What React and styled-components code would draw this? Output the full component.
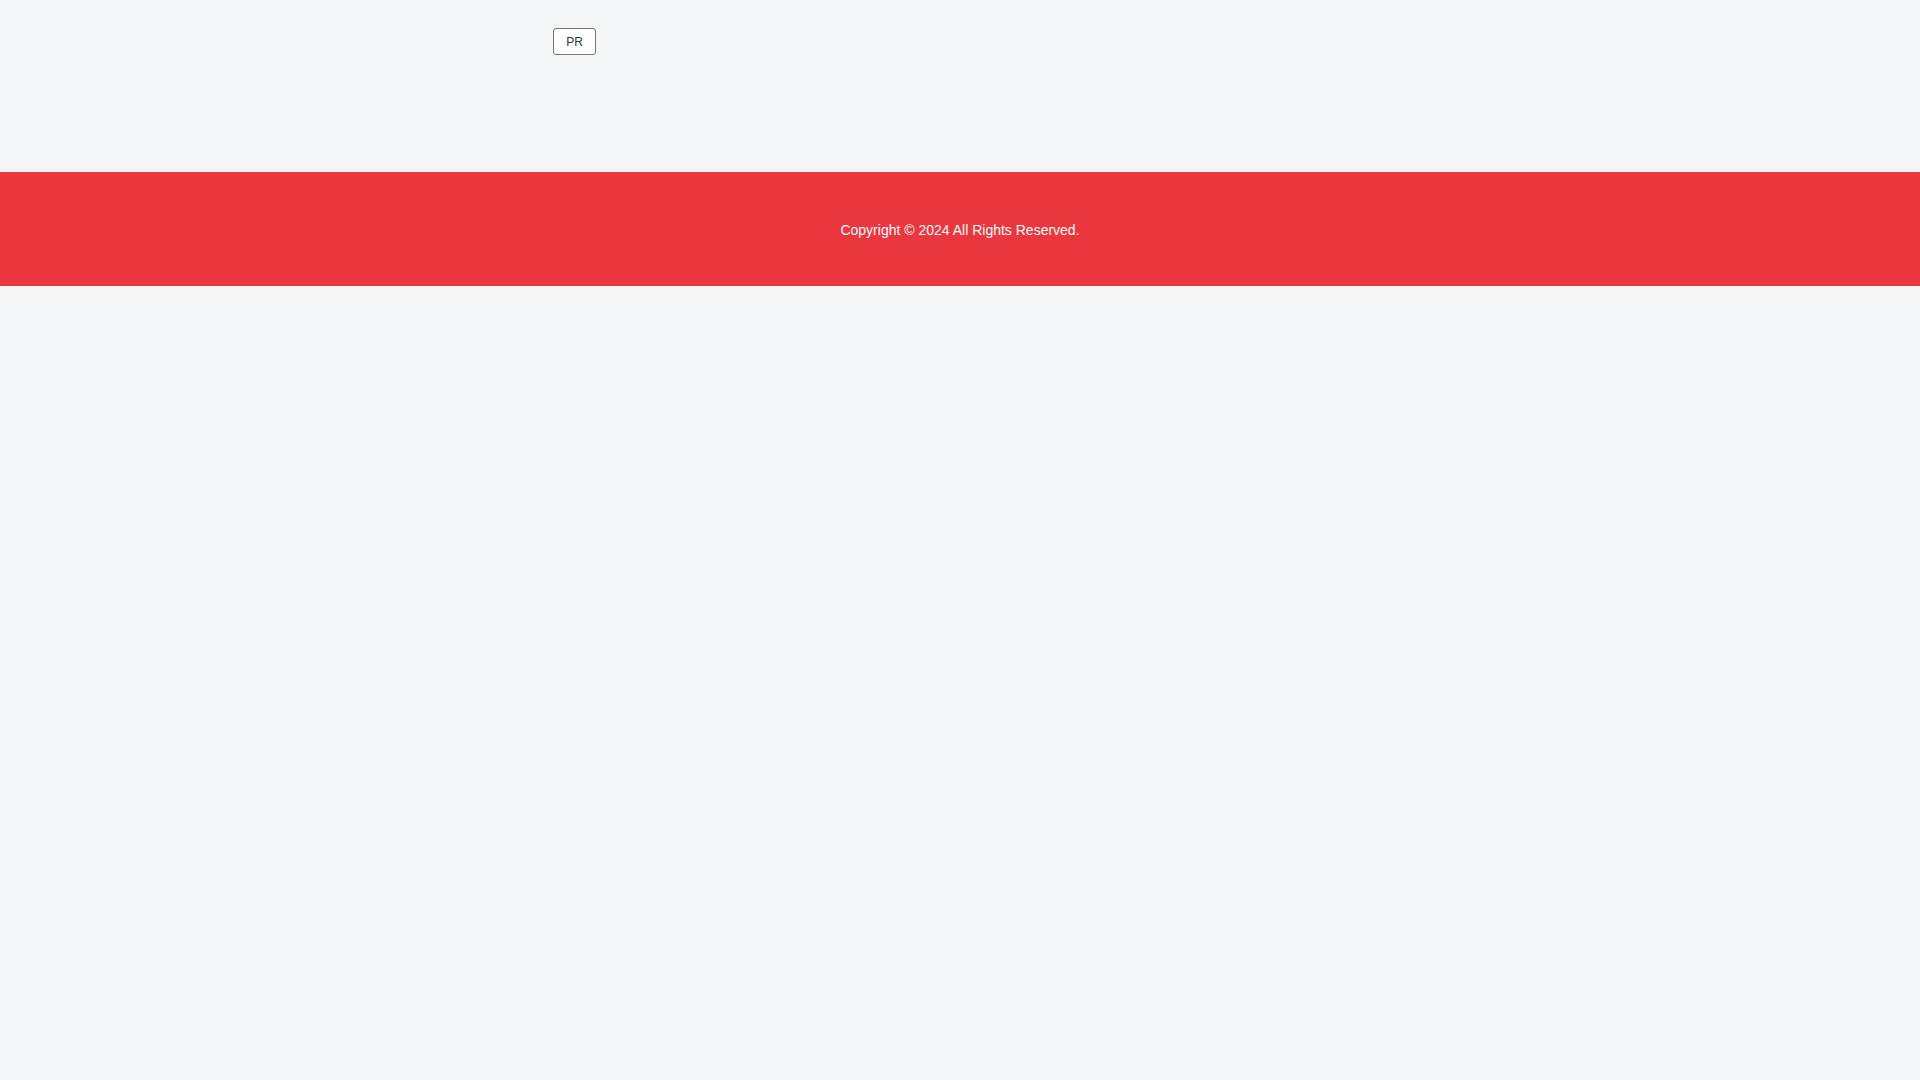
import React from "react"
import styled, { createGlobalStyle } from "styled-components"

const GlobalStyle = createGlobalStyle`
  html, body {
    margin: 0;
    padding: 0;
    background: #f4f5f7;
    font-family: "Liberation Sans", Arial, sans-serif;
  }
`

const Page = styled.div`
  min-height: 1080px;
  background: #f4f5f7;
`

const Header = styled.header`
  height: 172px;
  box-sizing: border-box;
  padding: 28px 0 0 553px;
  display: flex;
  align-items: flex-start;
`

const LangButton = styled.button`
  width: 43px;
  height: 27px;
  box-sizing: border-box;
  border: 1px solid #767676;
  border-radius: 3px;
  background: #ffffff;
  color: #333333;
  font-family: "Liberation Sans", Arial, sans-serif;
  font-size: 12px;
  font-weight: 400;
  padding: 0;
  cursor: pointer;
`

const Footer = styled.footer`
  height: 114px;
  background: #ec363e;
  display: flex;
  align-items: center;
  justify-content: center;
`

const Copy = styled.p`
  margin: 0;
  padding-top: 2px;
  color: #ffffff;
  font-size: 14px;
`

export default function App() {
  return (
    <Page>
      <GlobalStyle />
      <Header>
        <LangButton>PR</LangButton>
      </Header>
      <Footer>
        <Copy>Copyright © 2024 All Rights Reserved.</Copy>
      </Footer>
    </Page>
  )
}
